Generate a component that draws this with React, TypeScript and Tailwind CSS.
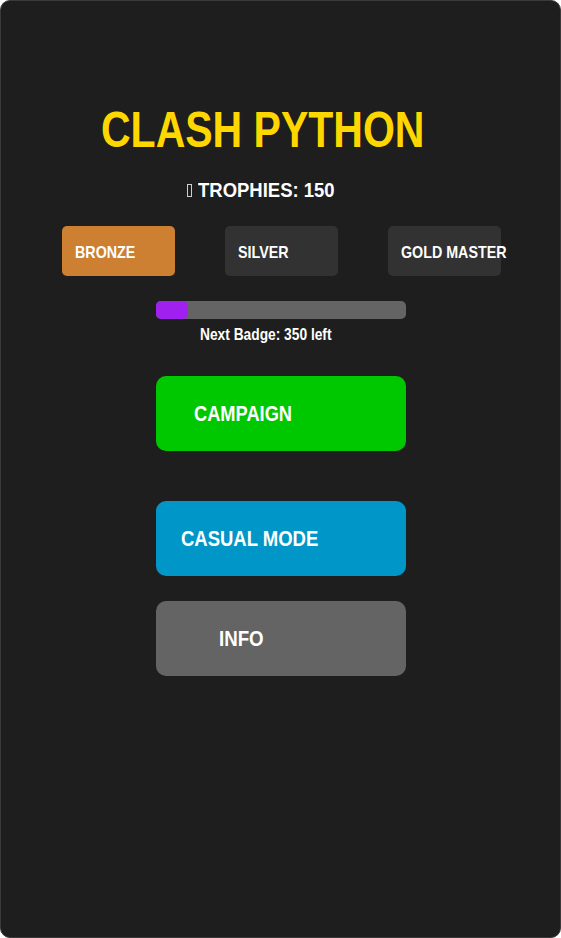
export default function App() {
  const badges = [
    { name: 'BRONZE', active: true },
    { name: 'SILVER', active: false },
    { name: 'GOLD MASTER', active: false },
  ];

  return (
    <div
      className="h-[938px] w-[561px] overflow-hidden rounded-[10px] border border-[#3a3a3a] bg-[#1e1e1e] text-white"
      style={{ fontFamily: '"Liberation Sans", Arial, sans-serif' }}
    >
      <div className="flex flex-col">
        <h1 className="mt-[99px] ml-[100px] whitespace-nowrap text-[50px] font-bold leading-[60px] text-[#ffd700]">
          <span className="inline-block origin-left scale-x-[0.82]">CLASH PYTHON</span>
        </h1>

        <div className="mt-[18px] ml-[186px] flex items-center gap-[6px] whitespace-nowrap text-[21px] font-bold leading-[24px]">
          <span className="inline-block h-[13px] w-[5px] border border-[#cfcfcf]" />
          <span className="inline-block origin-left scale-x-[0.88]">TROPHIES: 150</span>
        </div>

        <div className="mt-[24px] ml-[61px] flex gap-[50px]">
          {badges.map((b) => (
            <div
              key={b.name}
              className={`flex h-[50px] w-[113px] shrink-0 items-center whitespace-nowrap rounded-[5px] pl-[13px] pt-[3px] text-[17px] font-bold ${
                b.active ? 'bg-[#cd7f32]' : 'bg-[#323232]'
              }`}
            >
              <span className="inline-block origin-left scale-x-[0.84]">{b.name}</span>
            </div>
          ))}
        </div>

        <div className="mt-[25px] ml-[155px] h-[18px] w-[250px] rounded-[5px] bg-[#646464]">
          <div className="h-[18px] w-[32px] rounded-[5px] bg-[#a020f0]" />
        </div>
        <div className="mt-[7px] ml-[199px] whitespace-nowrap text-[16px] font-bold leading-[18px]">
          <span className="inline-block origin-left scale-x-[0.86]">Next Badge: 350 left</span>
        </div>

        <div className="mt-[32px] ml-[155px] flex flex-col">
          <button className="flex h-[75px] w-[250px] items-center whitespace-nowrap rounded-[10px] bg-[#00c800] pl-[38px] text-[22px] font-bold">
            <span className="inline-block origin-left scale-x-[0.83]">CAMPAIGN</span>
          </button>
          <button className="mt-[50px] flex h-[75px] w-[250px] items-center whitespace-nowrap rounded-[10px] bg-[#0096c8] pl-[25px] text-[22px] font-bold">
            <span className="inline-block origin-left scale-x-[0.84]">CASUAL MODE</span>
          </button>
          <button className="mt-[25px] flex h-[75px] w-[250px] items-center whitespace-nowrap rounded-[10px] bg-[#646464] pl-[63px] text-[22px] font-bold">
            <span className="inline-block origin-left scale-x-[0.85]">INFO</span>
          </button>
        </div>
      </div>
    </div>
  );
}
